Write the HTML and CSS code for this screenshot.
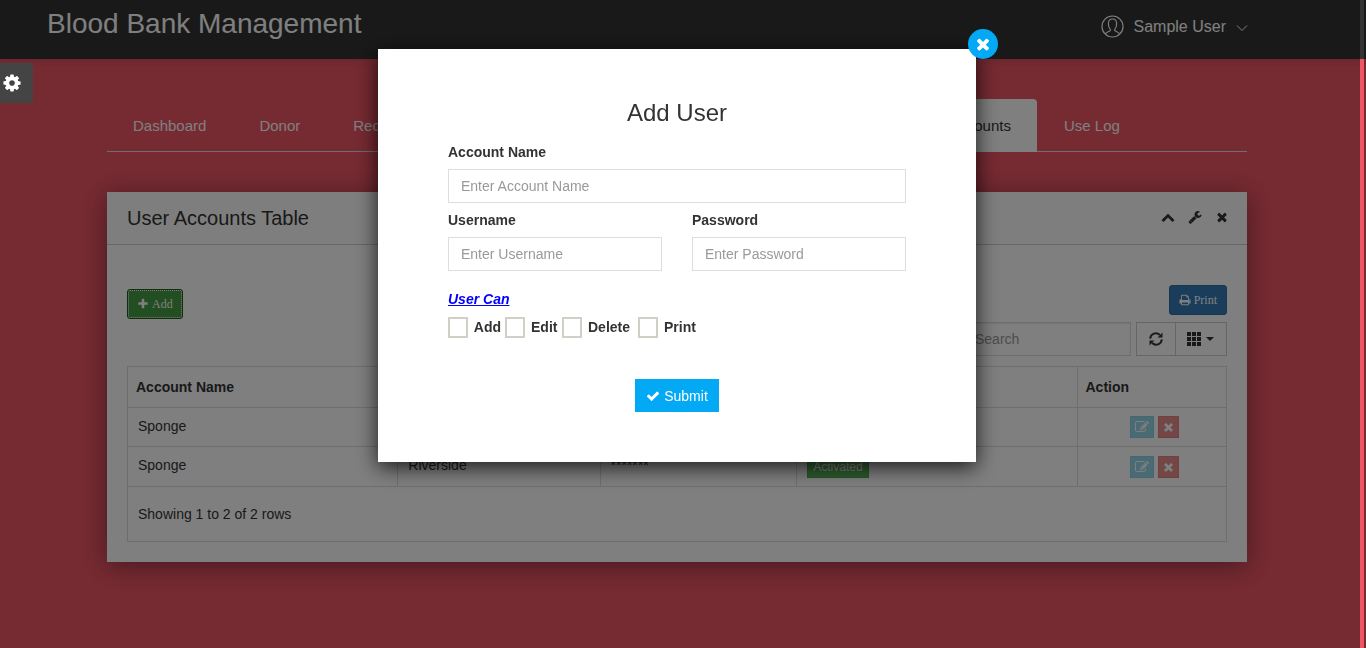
FILE: index.html
```html
<!DOCTYPE html>
<html lang="en">
<head>
<meta charset="utf-8">
<title>Blood Bank Management</title>
<link rel="stylesheet" href="styles.css">
</head>
<body>
<svg class="sprite" aria-hidden="true">
  <symbol id="times" viewBox="0 0 1792 1792"><path d="M1490 1322q0 40-28 68l-136 136q-28 28-68 28t-68-28l-294-294-294 294q-28 28-68 28t-68-28l-136-136q-28-28-28-68t28-68l294-294-294-294q-28-28-28-68t28-68l136-136q28-28 68-28t68 28l294 294 294-294q28-28 68-28t68 28l136 136q28 28 28 68t-28 68l-294 294 294 294q28 28 28 68z"/></symbol>
  <symbol id="cog" viewBox="0 0 1792 1792"><path d="M1152 896q0-106-75-181t-181-75-181 75-75 181 75 181 181 75 181-75 75-181zm512-109v222q0 12-8 23t-20 13l-185 28q-19 54-39 91 35 50 107 138 10 12 10 25t-9 23q-27 37-99 108t-94 71q-12 0-26-9l-138-108q-44 23-91 38-16 136-29 186-7 28-36 28h-222q-14 0-24.5-8.5t-11.5-21.5l-28-184q-49-16-90-37l-141 107q-10 9-25 9-14 0-25-11-126-114-165-168-7-10-7-23 0-12 8-23 15-21 51-66.5t54-70.5q-27-50-41-99l-183-27q-13-2-21-12.5t-8-23.5v-222q0-12 8-23t19-13l186-28q14-46 39-92-40-57-107-138-10-12-10-24 0-10 9-23 26-36 98.5-107.5t94.5-71.5q13 0 26 10l138 107q44-23 91-38 16-136 29-186 7-28 36-28h222q14 0 24.5 8.5t11.5 21.5l28 184q49 16 90 37l142-107q9-9 24-9 13 0 25 10 129 119 165 170 7 8 7 22 0 12-8 23-15 21-51 66.5t-54 70.5q26 50 41 98l183 28q13 2 21 12.5t8 23.5z"/></symbol>
  <symbol id="check" viewBox="0 0 1792 1792"><path d="M1671 566q0 40-28 68l-724 724-136 136q-28 28-68 28t-68-28l-136-136-362-362q-28-28-28-68t28-68l136-136q28-28 68-28t68 28l294 295 656-657q28-28 68-28t68 28l136 136q28 28 28 68z"/></symbol>
  <symbol id="plus" viewBox="0 0 1792 1792"><path d="M1600 736v192q0 40-28 68t-68 28h-416v416q0 40-28 68t-68 28h-192q-40 0-68-28t-28-68v-416h-416q-40 0-68-28t-28-68v-192q0-40 28-68t68-28h416v-416q0-40 28-68t68-28h192q40 0 68 28t28 68v416h416q40 0 68 28t28 68z"/></symbol>
  <symbol id="wrench" viewBox="0 0 1792 1792"><path d="M448 1472q0-26-19-45t-45-19-45 19-19 45 19 45 45 19 45-19 19-45zm644-420l-682 682q-37 37-90 37-52 0-91-37l-106-108q-38-36-38-90 0-53 38-91l681-681q39 98 114.5 173.5t173.5 114.5zm634-435q0 39-23 106-47 134-164.5 217.5t-258.5 83.5q-185 0-316.5-131.5t-131.5-316.5 131.5-316.5 316.5-131.5q58 0 121.5 16.5t107.5 46.5q16 11 16 28t-16 28l-293 169v224l193 107q5-3 79-48.5t135.5-81 70.5-35.5q15 0 23.5 10t8.5 25z"/></symbol>
  <symbol id="print" viewBox="0 0 1792 1792"><path d="M448 1536h896v-256h-896v256zm0-640h896v-384h-160q-40 0-68-28t-28-68v-160h-640v640zm1152 64q0-26-19-45t-45-19-45 19-19 45 19 45 45 19 45-19 19-45zm128 0v416q0 13-9.5 22.5t-22.5 9.5h-224v160q0 40-28 68t-68 28h-960q-40 0-68-28t-28-68v-160h-224q-13 0-22.5-9.5t-9.5-22.5v-416q0-79 56.5-135.5t135.5-56.5h64v-544q0-40 28-68t68-28h672q40 0 88 20t76 48l152 152q28 28 48 76t20 88v256h64q79 0 135.5 56.5t56.5 135.5z"/></symbol>
  <symbol id="edit" viewBox="0 0 1792 1792"><path d="M888 1184l116-116-152-152-116 116v56h96v96h56zm440-720q-16-16-33 1l-350 350q-17 17-1 33t33-1l350-350q17-17 1-33zm80 594v190q0 119-84.5 203.5t-203.5 84.5h-832q-119 0-203.5-84.5t-84.5-203.5v-832q0-119 84.5-203.5t203.5-84.5h832q63 0 117 25 15 7 18 23 3 17-9 29l-49 49q-14 14-32 8-23-6-45-6h-832q-66 0-113 47t-47 113v832q0 66 47 113t113 47h832q66 0 113-47t47-113v-126q0-13 9-22l64-64q15-15 35-7t20 29zm-96-738l288 288-672 672h-288v-288zm444 132l-92 92-288-288 92-92q28-28 68-28t68 28l152 152q28 28 28 68t-28 68z"/></symbol>
  <symbol id="up" viewBox="0 0 1792 1792"><path d="M1683 1331l-166 165q-19 19-45 19t-45-19l-531-531-531 531q-19 19-45 19t-45-19l-166-165q-19-19-19-45.500t19-45.500l742-741q19-19 45-19t45 19l742 741q19 19 19 45.500t-19 45.500z"/></symbol>
  <symbol id="refresh" viewBox="0 0 14 14"><path d="M1.200 6.600A5.600 5.600 0 0 1 10.800 3M12.800 7.400A5.600 5.600 0 0 1 3.200 11" fill="none" stroke="currentColor" stroke-width="1.900"/><path d="M13.500.5v5H8.600zM.5 13.500v-5h4.900z"/></symbol>
  <symbol id="grid" viewBox="0 0 14 14"><path d="M0 0h4v4H0zM5 0h4v4H5zM10 0h4v4h-4zM0 5h4v4H0zM5 5h4v4H5zM10 5h4v4h-4zM0 10h4v4H0zM5 10h4v4H5zM10 10h4v4h-4z"/></symbol>
  <symbol id="user" viewBox="0 0 24 24"><g fill="none" stroke="currentColor" stroke-width="1.200"><circle cx="12" cy="12" r="11"/><path d="M4.500 19.800c.7-1.300 2-1.900 3.500-2.500 1.500-.5 2.100-1.200 1.700-2.300C8.300 13.700 7.700 12 7.700 9c0-3.200 1.600-4.800 4.300-4.800S16.300 5.800 16.300 9c0 3-.6 4.700-2 6-.4 1.100.2 1.800 1.700 2.300 1.500.6 2.800 1.200 3.500 2.500"/></g></symbol>
  <symbol id="down" viewBox="0 0 12 12"><path d="M1 3.500l5 5 5-5" fill="none" stroke="currentColor"/></symbol>
</svg>

<header class="topbar">
  <h1 class="brand">Blood Bank Management</h1>
  <a class="account" href="#"><svg class="account-avatar"><use href="#user"/></svg>Sample User<svg class="account-arrow"><use href="#down"/></svg></a>
</header>

<main class="container">
  <nav class="tabs">
    <a class="tab" href="#">Dashboard</a>
    <a class="tab" href="#">Donor</a>
    <a class="tab tab-wide" href="#">Recipient</a>
    <a class="tab tab-active" href="#">User Accounts</a>
    <a class="tab" href="#">Use Log</a>
  </nav>

  <section class="panel">
    <div class="panel-head">
      <h2 class="panel-title">User Accounts Table</h2>
      <div class="panel-tools">
        <button class="tool" type="button" aria-label="Collapse"><svg><use href="#up"/></svg></button>
        <button class="tool" type="button" aria-label="Settings"><svg><use href="#wrench"/></svg></button>
        <button class="tool" type="button" aria-label="Close"><svg><use href="#times"/></svg></button>
      </div>
    </div>
    <div class="panel-body">
      <div class="actions">
        <button class="btn btn-add" type="button"><svg><use href="#plus"/></svg> Add</button>
        <button class="btn btn-print" type="button"><svg><use href="#print"/></svg> Print</button>
      </div>
      <div class="filters">
        <input class="field search" type="text" placeholder="Search" aria-label="Search">
        <div class="group">
          <button class="group-btn" type="button" aria-label="Refresh"><svg><use href="#refresh"/></svg></button>
          <button class="group-btn" type="button" aria-label="Columns"><svg><use href="#grid"/></svg><span class="caret"></span></button>
        </div>
      </div>
      <table class="grid">
        <colgroup><col class="c-name"><col class="c-user"><col class="c-pass"><col class="c-status"><col class="c-action"></colgroup>
        <thead>
          <tr><th>Account Name</th><th></th><th></th><th></th><th>Action</th></tr>
        </thead>
        <tbody>
          <tr>
            <td>Sponge</td><td></td><td></td>
            <td class="cell-btn"></td>
            <td class="cell-btn cell-action"><button class="mini mini-edit" type="button" aria-label="Edit"><svg><use href="#edit"/></svg></button><button class="mini mini-del" type="button" aria-label="Delete"><svg><use href="#times"/></svg></button></td>
          </tr>
          <tr>
            <td>Sponge</td><td>Riverside</td><td>*******</td>
            <td class="cell-btn"><button class="mini mini-ok" type="button">Activated</button></td>
            <td class="cell-btn cell-action"><button class="mini mini-edit" type="button" aria-label="Edit"><svg><use href="#edit"/></svg></button><button class="mini mini-del" type="button" aria-label="Delete"><svg><use href="#times"/></svg></button></td>
          </tr>
        </tbody>
      </table>
      <p class="summary">Showing 1 to 2 of 2 rows</p>
    </div>
  </section>
</main>

<div class="overlay">
  <form class="modal" role="dialog" aria-labelledby="modal-title">
    <button class="modal-close" type="button" aria-label="Close"><svg><use href="#times"/></svg></button>
    <h2 class="modal-title" id="modal-title">Add User</h2>
    <div class="form-grid">
      <div class="form-item form-item-full">
        <label class="label" for="account">Account Name</label>
        <input class="field" id="account" type="text" placeholder="Enter Account Name">
      </div>
      <div class="form-item">
        <label class="label" for="username">Username</label>
        <input class="field" id="username" type="text" placeholder="Enter Username">
      </div>
      <div class="form-item">
        <label class="label" for="password">Password</label>
        <input class="field" id="password" type="password" placeholder="Enter Password">
      </div>
    </div>
    <p class="rights-title">User Can</p>
    <div class="rights">
      <label class="right"><input class="box" type="checkbox">Add</label>
      <label class="right"><input class="box" type="checkbox">Edit</label>
      <label class="right"><input class="box" type="checkbox">Delete</label>
      <label class="right"><input class="box" type="checkbox">Print</label>
    </div>
    <button class="submit" type="submit"><svg><use href="#check"/></svg>Submit</button>
  </form>
</div>

<button class="settings" type="button" aria-label="Theme settings"><svg><use href="#cog"/></svg></button>
<div class="scroll-thumb"></div>
</body>
</html>
```

FILE: styles.css
```css
* { box-sizing: border-box; }

body {
  margin: 0;
  min-height: 100vh;
  background: #ed5565;
  color: #333;
  font: 14px/20px "Liberation Sans", Arial, sans-serif;
}

h1, h2, p { margin: 0; font-weight: normal; }
a { color: inherit; text-decoration: none; }
button, input { font: inherit; color: inherit; margin: 0; }
button { border: 0; padding: 0; background: none; cursor: pointer; }
svg { width: 14px; height: 14px; fill: currentColor; flex: none; }
.sprite { position: absolute; width: 0; height: 0; }

/* Top bar */
.topbar {
  display: flex;
  justify-content: space-between;
  height: 59px;
  padding: 0 118px 0 47px;
  background: #333;
  color: #fff;
  box-shadow: 0 0 10px rgba(0, 0, 0, .15);
}
.brand { font-size: 28px; line-height: 48px; }
.account {
  display: flex;
  align-items: center;
  height: 53px;
  font-size: 16px;
}
.account-avatar { width: 23px; height: 23px; margin-right: 10px; }
.account-arrow { width: 12px; height: 12px; margin: 2px 0 0 10px; }

/* Tabs */
.container { margin: 40px 119px 86px 107px; }
.tabs {
  display: flex;
  gap: 1px;
  margin-bottom: 40px;
  border-bottom: 1px solid #ddd;
  color: #fff;
}
.tab { padding: 16px 26px; font-size: 15px; margin-bottom: -1px; line-height: 21px; }
.tab-wide { flex: 0 0 560px; }
.tab-active { background: #fff; color: #333; border-radius: 4px 4px 0 0; }

/* Panel */
.panel { background: #fff; box-shadow: 0 4px 25px rgba(0, 0, 0, .4); }
.panel-head {
  display: flex;
  align-items: center;
  justify-content: space-between;
  height: 53px;
  padding: 0 18px 0 20px;
  border-bottom: 1px solid #ccc;
  background: #fcfcfc;
}
.panel-title { font-size: 20px; line-height: 24px; }
.panel-tools { display: flex; gap: 13px; padding-bottom: 2px; }
.tool { display: flex; }
.panel-body { padding: 40px 20px 20px; }

.actions { display: flex; justify-content: space-between; height: 34px; }
.btn {
  display: flex;
  align-items: center;
  gap: 3px;
  height: 30px;
  padding: 0 9px;
  border: 1px solid #2e6da4;
  border-radius: 3px;
  background: #337ab7;
  color: #fff;
  font: 12px/18px "Liberation Serif", "Times New Roman", serif;
}
.btn svg { width: 12px; height: 12px; }
.btn-add {
  align-self: flex-end;
  background: #449d44;
  border-color: #255625;
  outline: 1px dotted #fff;
  outline-offset: -2px;
}

.filters { display: flex; justify-content: flex-end; gap: 5px; margin: 3px 0 10px; }
.field {
  display: block;
  width: 100%;
  height: 34px;
  padding: 6px 12px;
  border: 1px solid #ddd;
  background: #fff;
}
.field::placeholder { color: #999; opacity: 1; }
.search { width: 169px; box-shadow: inset 0 1px 1px rgba(0, 0, 0, .08); }
.group { display: flex; border: 1px solid #ccc; }
.group-btn { display: flex; align-items: center; gap: 5px; height: 32px; padding: 0 12px; }
.group-btn + .group-btn { border-left: 1px solid #ccc; padding: 0 12px 0 11px; }
.caret { border: 4px solid transparent; border-top-color: #333; border-bottom: 0; }

.grid { width: 100%; table-layout: fixed; border-collapse: collapse; }
.c-name { width: 24.6%; }
.c-user { width: 18.4%; }
.c-pass { width: 17.9%; }
.c-status { width: 25.5%; }
.grid th, .grid td { border: 1px solid #ddd; }
.grid th { padding: 10px 8px; text-align: left; }
.grid td { padding: 8px 10px 10px; }
.grid .cell-btn { padding: 8px 10px; }
.grid .cell-action { padding: 8px 4px 8px 10px; text-align: center; }
.mini {
  height: 22px;
  padding: 0 5px;
  border: 1px solid;
  color: #fff;
  font-size: 12px;
  line-height: 18px;
  vertical-align: middle;
}
.mini svg { display: block; width: 14px; height: 14px; }
.mini-ok { background: #5cb85c; border-color: #4cae4c; }
.mini-edit { padding: 0 4px; background: #5bc0de; border-color: #46b8da; opacity: .65; }
.mini-del { margin-left: 4px; padding: 0 3px; background: #d9534f; border-color: #d43f3a; opacity: .65; }
.mini-del svg { width: 13px; }
.summary { padding: 17px 10px; border: 1px solid #ddd; border-top: 0; }

/* Dialog */
.overlay {
  position: fixed;
  inset: 0;
  display: flex;
  justify-content: center;
  align-items: flex-start;
  padding: 49px 12px 0 0;
  background: rgba(0, 0, 0, .5);
}
.modal {
  position: relative;
  display: flex;
  flex-direction: column;
  width: 598px;
  padding: 50px 70px;
  background: #fff;
  box-shadow: 0 5px 20px rgba(0, 0, 0, .8);
}
.modal-close {
  position: absolute;
  top: -20px;
  right: -22px;
  display: grid;
  place-items: center;
  width: 30px;
  height: 30px;
  border-radius: 50%;
  background: #03a9f4;
  color: #fff;
}
.modal-close svg { width: 18px; height: 18px; }
.modal-title { margin-bottom: 15px; font-size: 24px; line-height: 28px; text-align: center; }
.form-grid { display: grid; grid-template-columns: 1fr 1fr; gap: 7px 30px; }
.form-item-full { grid-column: 1 / -1; }
.label { display: block; margin-bottom: 7px; font-weight: bold; }
.rights-title {
  margin: 18px 0 8px;
  color: #00f;
  font-weight: bold;
  font-style: italic;
  text-decoration: underline;
}
.rights { display: grid; grid-template-columns: 53px 53px 72px auto; gap: 4px; }
.right { display: flex; align-items: flex-start; gap: 6px; font-weight: bold; }
.box {
  appearance: none;
  width: 20px;
  height: 21px;
  border: 2px solid #d2cec8;
  background: #fff;
}
.submit {
  display: flex;
  align-items: center;
  align-self: center;
  gap: 4px;
  height: 33px;
  margin-top: 41px;
  padding: 0 11px;
  background: #03a9f4;
  color: #fff;
}

/* Fixed page furniture */
.settings {
  position: fixed;
  left: 0;
  top: 63px;
  display: flex;
  align-items: center;
  width: 33px;
  height: 40px;
  padding-left: 2px;
  background: #444;
  color: #fff;
}
.settings svg { width: 20px; height: 20px; }
.scroll-thumb {
  position: fixed;
  top: 0;
  right: 2px;
  bottom: 0;
  width: 4px;
  background: linear-gradient(#333 59px, #ed5565 59px);
}
```
